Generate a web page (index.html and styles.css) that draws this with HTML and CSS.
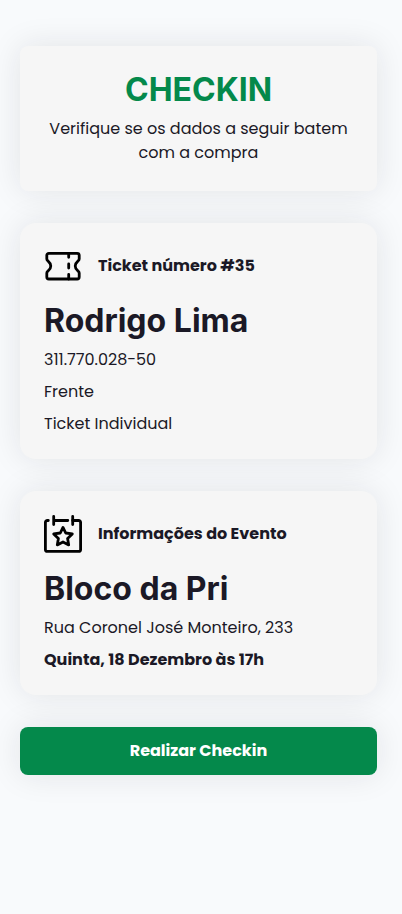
FILE: index.html
```html
<!DOCTYPE html>
<html lang="pt-BR">
<head>
  <meta charset="utf-8">
  <meta name="viewport" content="width=device-width, initial-scale=1">
  <title>Checkin</title>
  <link rel="stylesheet" href="styles.css">
</head>
<body>
  <main class="page">
    <header class="card card--intro">
      <h1 class="title">CHECKIN</h1>
      <p class="text">Verifique se os dados a seguir batem com a compra</p>
    </header>

    <section class="card">
      <div class="card-head">
        <svg class="icon" viewBox="0 0 38 38" aria-hidden="true">
          <path d="M4.8 6.3H33.2A2 2 0 0 1 35.2 8.3V12C35.2 13.2 34.6 13.6 33.7 14.3C30.4 17 30.4 21 33.7 23.7C34.6 24.4 35.2 24.8 35.2 26V30A2 2 0 0 1 33.2 32H4.8A2 2 0 0 1 2.8 30V26C2.8 24.8 3.4 24.4 4.3 23.7C7.6 21 7.6 17 4.3 14.3C3.4 13.6 2.8 13.2 2.8 12V8.3A2 2 0 0 1 4.8 6.3Z"/>
          <path d="M24.7 6.5V10.3M24.7 17V21M24.7 27.5V32"/>
        </svg>
        <h2 class="label">Ticket número #35</h2>
      </div>
      <p class="name">Rodrigo Lima</p>
      <div class="lines">
        <p class="text">311.770.028-50</p>
        <p class="text">Frente</p>
        <p class="text">Ticket Individual</p>
      </div>
    </section>

    <section class="card">
      <div class="card-head">
        <svg class="icon" viewBox="0 0 38 38" aria-hidden="true">
          <path d="M4.3 5.5H3.4A2 2 0 0 0 1.4 7.5V34.4A2 2 0 0 0 3.4 36.4H34.6A2 2 0 0 0 36.6 34.4V7.5A2 2 0 0 0 34.6 5.5H28.7"/>
          <path d="M9.7 1.4V9.5M28.7 1.4V9.5M9.7 5.5H23.8"/>
          <path d="M19 12.4 21.7 18 28.3 18.9 23.6 23.5 24.7 29.9 19 27 13.3 29.9 14.4 23.5 9.7 18.9 16.3 18Z"/>
        </svg>
        <h2 class="label">Informações do Evento</h2>
      </div>
      <p class="name">Bloco da Pri</p>
      <div class="lines">
        <p class="text">Rua Coronel José Monteiro, 233</p>
        <p class="text text--strong">Quinta, 18 Dezembro às 17h</p>
      </div>
    </section>

    <button class="button" type="button">Realizar Checkin</button>
  </main>
</body>
</html>
```
FILE: styles.css
```css
* {
  box-sizing: border-box;
}

body {
  margin: 0;
  min-height: 100vh;
  background: #f8fafc;
  color: #1b1926;
  font-family: Poppins, Inter, sans-serif;
  font-size: 16px;
  line-height: 24px;
}

h1,
h2,
p {
  margin: 0;
}

.page {
  display: flex;
  flex-direction: column;
  gap: 32px;
  padding: 46px 25px 46px 20px;
}

.card {
  display: flex;
  flex-direction: column;
  padding: 24px 24px 23px;
  border-radius: 16px;
  background: #f6f6f6;
  box-shadow: 0 0 32px rgba(27, 25, 38, 0.1);
}

.card--intro {
  gap: 8px;
  padding-bottom: 26px;
  border-radius: 8px;
  text-align: center;
}

.title,
.name {
  font-family: Inter, sans-serif;
  font-size: 32px;
  font-weight: 700;
  line-height: 39px;
}

.title {
  color: #04894b;
}

.name {
  margin-bottom: 8px;
}

.card-head {
  display: flex;
  align-items: center;
  gap: 16px;
  margin-bottom: 16px;
}

.icon {
  flex: none;
  width: 38px;
  height: 38px;
  fill: none;
  stroke: #000;
  stroke-width: 2.8;
  stroke-linecap: round;
  stroke-linejoin: round;
}

.label {
  font-size: 16px;
  font-weight: 700;
}

.lines {
  display: flex;
  flex-direction: column;
  gap: 8px;
}

.text--strong {
  font-weight: 700;
}

.button {
  height: 48px;
  border: 0;
  border-radius: 8px;
  background: #04894b;
  box-shadow: 0 0 32px rgba(27, 25, 38, 0.1);
  color: #fff;
  font: inherit;
  font-weight: 700;
  cursor: pointer;
}
```
